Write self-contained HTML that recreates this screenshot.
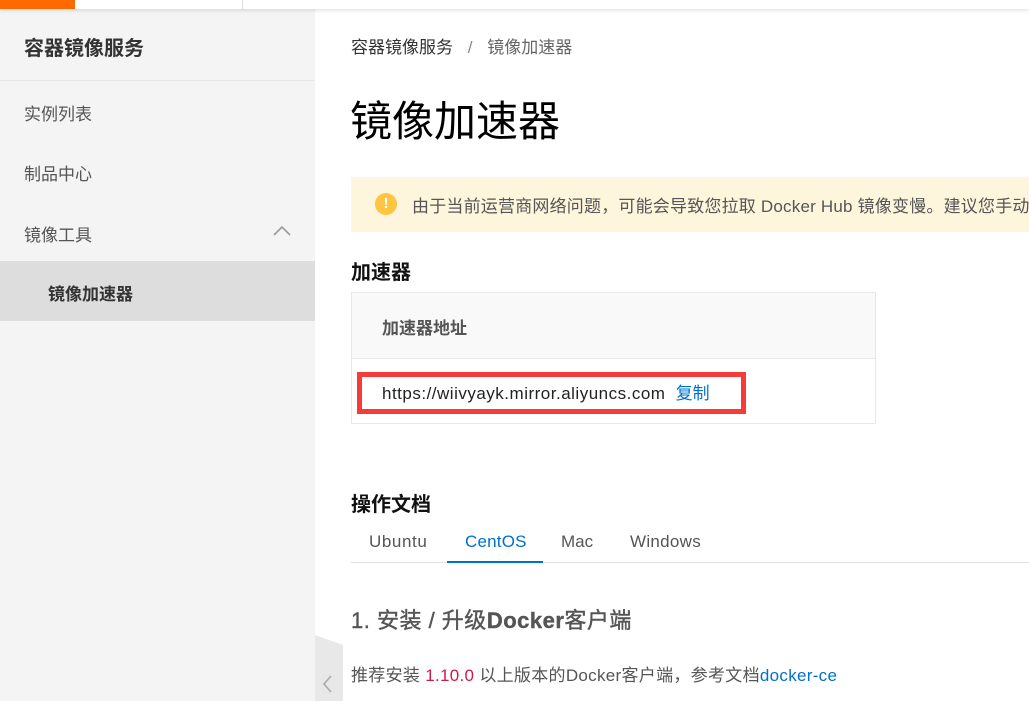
<!DOCTYPE html>
<html><head><meta charset="utf-8"><style>
*{margin:0;padding:0;box-sizing:border-box}
body{width:1029px;height:701px;overflow:hidden;background:#fff;font-family:"Liberation Sans","Noto Sans CJK SC",sans-serif;position:relative;color:#333}
.a{position:absolute;white-space:nowrap}
</style></head><body>
<div class="a" style="left:0;top:0;width:1029px;height:9px;background:#fff;box-shadow:0 1px 4px rgba(0,0,0,.15);z-index:3"></div>
<div class="a" style="left:0;top:0;width:75px;height:9px;background:#ff6a00;z-index:4"></div>
<div class="a" style="left:242px;top:0;width:1px;height:9px;background:#ddd;z-index:4"></div>
<div class="a" style="left:0;top:9px;width:315px;height:692px;background:#f4f4f4"></div>
<div class="a" style="left:24px;top:32px;font-size:20px;font-weight:bold;color:#333">容器镜像服务</div>
<div class="a" style="left:0;top:80px;width:315px;height:1px;background:#e6e6e6"></div>
<div class="a" style="left:24px;top:100px;font-size:17px;color:#555">实例列表</div>
<div class="a" style="left:24px;top:160px;font-size:17px;color:#555">制品中心</div>
<div class="a" style="left:24px;top:221px;font-size:17px;color:#555">镜像工具</div>
<svg class="a" style="left:272px;top:224px" width="20" height="14"><path d="M2 11 L10 3 L18 11" fill="none" stroke="#999" stroke-width="1.6"/></svg>
<div class="a" style="left:0;top:261px;width:315px;height:60px;background:#ddd"></div>
<div class="a" style="left:48px;top:280px;font-size:17px;font-weight:bold;color:#333">镜像加速器</div>
<div class="a" style="left:315px;top:635px;width:28px;height:66px;background:#e8e8e8;clip-path:polygon(0 0,100% 15%,100% 100%,0 100%)"></div>
<svg class="a" style="left:321px;top:674px" width="14" height="20"><path d="M10 2 L3 10 L10 18" fill="none" stroke="#aaa" stroke-width="1.6"/></svg>
<div class="a" style="left:351px;top:33px;font-size:17px;color:#333">容器镜像服务 <span style="color:#888;margin:0 10px">/</span> <span style="color:#666">镜像加速器</span></div>
<div class="a" style="left:350px;top:88px;font-size:42px;color:#000">镜像加速器</div>
<div class="a" style="left:351px;top:177px;width:678px;height:55px;background:#fdf5dc"></div>
<div class="a" style="left:375px;top:193px;width:22px;height:22px;border-radius:50%;background:#ffc440;color:#fff;font-size:15px;font-weight:bold;text-align:center;line-height:22px">!</div>
<div class="a" style="left:412px;top:192px;font-size:17px;color:#555;letter-spacing:0.2px">由于当前运营商网络问题，可能会导致您拉取 Docker Hub 镜像变慢。建议您手动配置</div>
<div class="a" style="left:351px;top:256px;font-size:20px;font-weight:bold;color:#111">加速器</div>
<div class="a" style="left:351px;top:292px;width:525px;height:132px;border:1px solid #e8e8e8"></div>
<div class="a" style="left:352px;top:293px;width:523px;height:66px;background:#f9f9f9;border-bottom:1px solid #e8e8e8"></div>
<div class="a" style="left:382px;top:314px;font-size:17px;font-weight:bold;color:#555">加速器地址</div>
<div class="a" style="left:357px;top:372px;width:389px;height:42px;border:5px solid #f73a3a;background:#fff"></div>
<div class="a" style="left:382px;top:379px;font-size:17px;color:#222;letter-spacing:0.5px">https://wiivyayk.mirror.aliyuncs.com <span style="color:#0070cc;margin-left:5px;letter-spacing:0">复制</span></div>
<div class="a" style="left:351px;top:488px;font-size:20px;font-weight:bold;color:#111">操作文档</div>
<div class="a" style="left:351px;top:562px;width:678px;height:1px;background:#e0e0e0"></div>
<div class="a" style="left:369px;top:532px;font-size:17px;color:#555;letter-spacing:0.6px">Ubuntu</div>
<div class="a" style="left:465px;top:532px;font-size:17px;color:#0070cc;letter-spacing:0.2px">CentOS</div>
<div class="a" style="left:447px;top:561px;width:96px;height:2px;background:#0070cc"></div>
<div class="a" style="left:561px;top:532px;font-size:17px;color:#555">Mac</div>
<div class="a" style="left:630px;top:532px;font-size:17px;color:#555;letter-spacing:0.3px">Windows</div>
<div class="a" style="left:351px;top:603px;font-size:22px;color:#555;letter-spacing:0.5px;-webkit-text-stroke:0.4px #555">1. 安装 / 升级<b>Docker</b>客户端</div>
<div class="a" style="left:351px;top:661px;font-size:17px;color:#555;letter-spacing:0.3px">推荐安装 <span style="color:#d0184b">1.10.0</span> 以上版本的Docker客户端，参考文档<span style="color:#0070cc">docker-ce</span></div>
</body></html>
